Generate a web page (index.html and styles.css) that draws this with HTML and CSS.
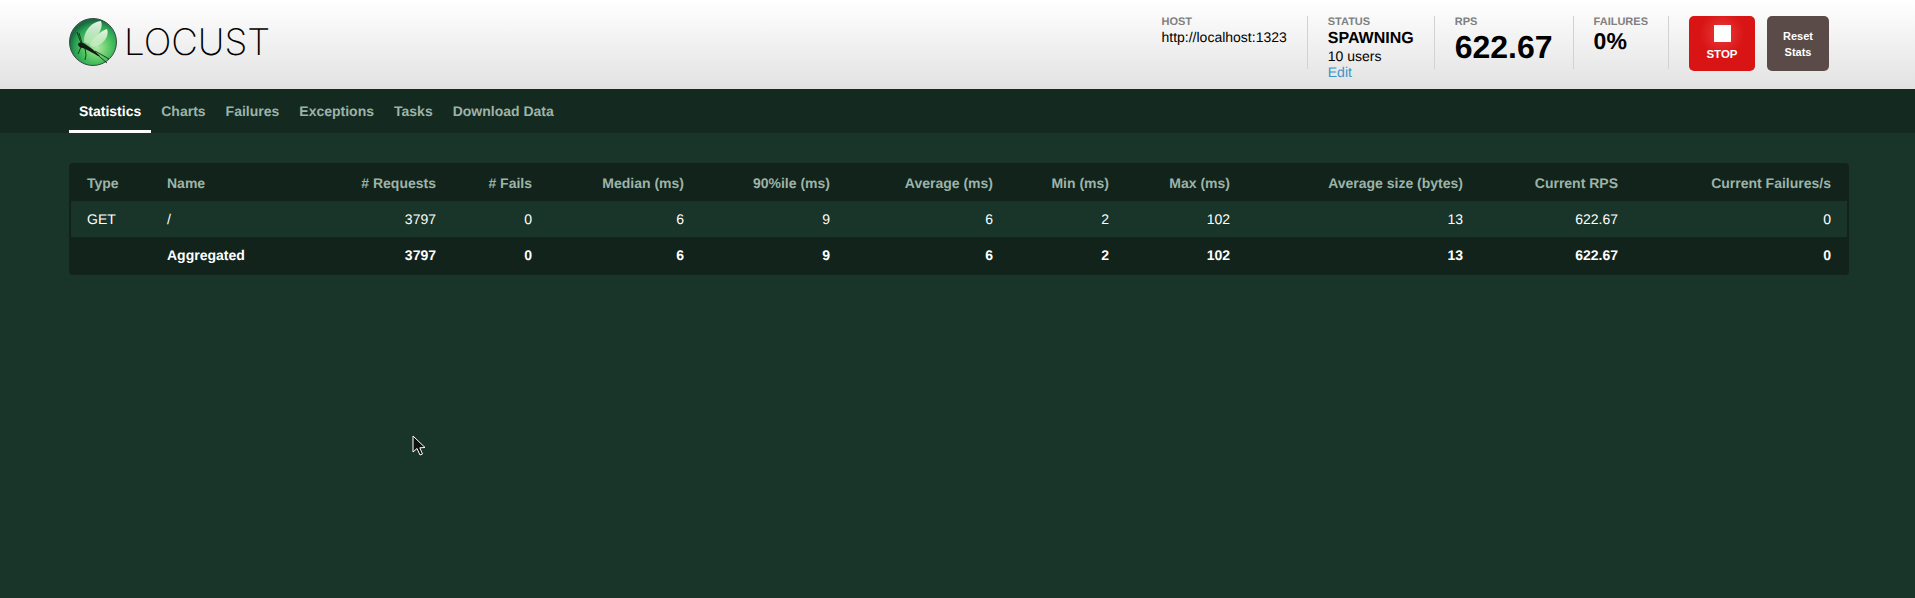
FILE: index.html
```html
<!DOCTYPE html>
<html>
<head>
    <title>Locust</title>
    <link rel="stylesheet" href="styles.css">
</head>
<body>
    <div class="header">
        <div class="logo">
            <svg class="logo-mark" width="48" height="48" viewBox="0 0 48 48">
                <defs>
                    <radialGradient id="ball" cx="58%" cy="62%" r="58%">
                        <stop offset="0" stop-color="#b4e8a6"/>
                        <stop offset="0.5" stop-color="#52c661"/>
                        <stop offset="0.82" stop-color="#28a052"/>
                        <stop offset="1" stop-color="#1a6b42"/>
                    </radialGradient>
                    <linearGradient id="wing" x1="0" y1="0" x2="0" y2="1">
                        <stop offset="0" stop-color="#f2faee" stop-opacity="0.95"/>
                        <stop offset="1" stop-color="#d8f1d3" stop-opacity="0.55"/>
                    </linearGradient>
                </defs>
                <circle cx="24" cy="24" r="23.5" fill="url(#ball)" stroke="#3a4c45" stroke-width="1"/>
                <path d="M15 24 C14 14 22 4 32 3 C35 10 28 21 19 26 Z" fill="url(#wing)"/>
                <path d="M20 26 C26 20 31 13 38 11 C41 19 33 28 23 29 Z" fill="url(#wing)"/>
                <path d="M9 26 C10 24 13 24 16 26 C21 29 26 33 31 38 L29 38 C24 35 19 32 14 30 C11 30 9 28 9 26 Z" fill="#101a14"/>
                <g fill="none" stroke="#101a14" stroke-width="0.8">
                    <path d="M12 25 L8 14"/>
                    <path d="M13 25 L10 15"/>
                    <path d="M12 29 L9 36"/>
                    <path d="M16 30 L17 37 L16 42"/>
                    <path d="M24 33 L38 45"/>
                    <path d="M26 33 L40 41"/>
                </g>
            </svg>
            <span class="logo-text">LOCUST</span>
        </div>
        <div class="stats">
            <div class="stat">
                <div class="stat-label">HOST</div>
                <div class="stat-text host-text">http://localhost:1323</div>
            </div>
            <div class="stat">
                <div class="stat-label">STATUS</div>
                <div class="stat-status">SPAWNING</div>
                <div class="stat-text">10 users</div>
                <a class="edit" href="#">Edit</a>
            </div>
            <div class="stat">
                <div class="stat-label">RPS</div>
                <div class="stat-big">622.67</div>
            </div>
            <div class="stat">
                <div class="stat-label">FAILURES</div>
                <div class="stat-medium">0%</div>
            </div>
        </div>
        <div class="buttons">
            <button class="stop-button"><span class="stop-icon"></span>STOP</button>
            <button class="reset-button">Reset<br>Stats</button>
        </div>
    </div>

    <div class="nav">
        <a class="tab active" href="#">Statistics</a>
        <a class="tab" href="#">Charts</a>
        <a class="tab" href="#">Failures</a>
        <a class="tab" href="#">Exceptions</a>
        <a class="tab" href="#">Tasks</a>
        <a class="tab" href="#">Download Data</a>
    </div>

    <div class="content">
        <div class="table-box">
            <table class="stats-table">
                <colgroup>
                    <col class="c-type"><col class="c-name"><col class="c-req"><col class="c-fails">
                    <col class="c-median"><col class="c-pct"><col class="c-avg"><col class="c-min">
                    <col class="c-max"><col class="c-size"><col class="c-rps"><col class="c-fps">
                </colgroup>
                <thead>
                    <tr>
                        <th class="left">Type</th>
                        <th class="left">Name</th>
                        <th># Requests</th>
                        <th># Fails</th>
                        <th>Median (ms)</th>
                        <th>90%ile (ms)</th>
                        <th>Average (ms)</th>
                        <th>Min (ms)</th>
                        <th>Max (ms)</th>
                        <th>Average size (bytes)</th>
                        <th>Current RPS</th>
                        <th>Current Failures/s</th>
                    </tr>
                </thead>
                <tbody>
                    <tr class="row">
                        <td class="left">GET</td>
                        <td class="left">/</td>
                        <td>3797</td>
                        <td>0</td>
                        <td>6</td>
                        <td>9</td>
                        <td>6</td>
                        <td>2</td>
                        <td>102</td>
                        <td>13</td>
                        <td>622.67</td>
                        <td>0</td>
                    </tr>
                    <tr class="total">
                        <td class="left"></td>
                        <td class="left">Aggregated</td>
                        <td>3797</td>
                        <td>0</td>
                        <td>6</td>
                        <td>9</td>
                        <td>6</td>
                        <td>2</td>
                        <td>102</td>
                        <td>13</td>
                        <td>622.67</td>
                        <td>0</td>
                    </tr>
                </tbody>
            </table>
        </div>
    </div>

    <!-- mouse pointer caught in the screenshot -->
    <svg class="pointer" width="14" height="22" viewBox="0 0 14 22">
        <path d="M1 1 L1 17 L5 13.5 L8 20 L10.5 19 L7.8 12.8 L13 12.5 Z" fill="#0c0f0e" stroke="#fff" stroke-width="1"/>
    </svg>
</body>
</html>
```

FILE: styles.css
```css
* {
    box-sizing: border-box;
}

html, body {
    height: 100%;
}

body {
    margin: 0;
    background-color: #19352a;
    font-family: "Liberation Sans", Arial, sans-serif;
    font-size: 14px;
    color: #fff;
    text-rendering: geometricPrecision;
    overflow: hidden;
}

.header {
    height: 89px;
    padding: 16px 86px 0 69px;
    display: flex;
    background: linear-gradient(#fff, #e2e2e2);
    color: #000;
}

.logo {
    display: flex;
    align-items: center;
    height: 51px;
}

.logo-mark {
    margin-right: 7px;
}

.logo-text {
    font-family: "Inter", sans-serif;
    font-weight: 200;
    font-size: 36.7px;
    color: #000;
}

.stats {
    margin-left: auto;
    display: flex;
}

.stat {
    height: 53px;
    padding: 0 20px;
    border-right: 1px solid #d2d2d2;
}

.stat-label {
    font-size: 11px;
    font-weight: bold;
    line-height: 12px;
    color: #808080;
}

.stat-text {
    font-size: 14px;
    line-height: 16px;
}

.host-text {
    margin-top: 1px;
}

.stat-status {
    font-size: 16px;
    font-weight: bold;
    line-height: 18px;
    margin-top: 2px;
}

.stat-big {
    font-size: 32px;
    font-weight: bold;
    line-height: 38px;
}

.stat-medium {
    font-size: 23px;
    font-weight: bold;
    line-height: 26px;
}

.edit {
    display: block;
    font-size: 14px;
    line-height: 16px;
    color: #3b93c9;
    text-decoration: none;
}

.buttons {
    display: flex;
    gap: 12px;
    margin-left: 20px;
    align-items: flex-start;
}

.stop-button, .reset-button {
    height: 55px;
    border: 0;
    border-radius: 5px;
    padding: 0;
    color: #fff;
    font-family: inherit;
    font-size: 11px;
    font-weight: bold;
}

.stop-button {
    width: 66px;
    background: radial-gradient(circle at 50% 32%, #ea3c3c 0, #d91414 45%);
    font-size: 11.5px;
    display: flex;
    flex-direction: column;
    align-items: center;
    padding-top: 9px;
}

.stop-icon {
    width: 17px;
    height: 17px;
    background-color: #fff;
    margin-bottom: 6px;
}

.reset-button {
    width: 62px;
    background-color: #5a4b49;
    line-height: 16px;
}

.nav {
    height: 44px;
    padding-left: 69px;
    display: flex;
    background-color: #14291f;
}

.tab {
    height: 44px;
    padding: 14px 10px 0;
    font-weight: bold;
    color: #9db3a9;
    text-decoration: none;
    line-height: 16px;
}

.tab.active {
    color: #fff;
    border-bottom: 3px solid #fff;
}

.content {
    padding: 30px 66px 0 69px;
}

.table-box {
    width: 1780px;
    padding: 0 2px;
    border-radius: 4px;
    background-color: #11231a;
}

.stats-table {
    width: 100%;
    table-layout: fixed;
    border-collapse: collapse;
}

.c-type { width: 80px; }
.c-name { width: 157px; }
.c-req { width: 144px; }
.c-fails { width: 96px; }
.c-median { width: 152px; }
.c-pct { width: 146px; }
.c-avg { width: 163px; }
.c-min { width: 116px; }
.c-max { width: 121px; }
.c-size { width: 233px; }
.c-rps { width: 155px; }
.c-fps { width: 213px; }

.stats-table th, .stats-table td {
    padding: 0 16px;
    text-align: right;
    white-space: nowrap;
}

.stats-table th {
    height: 38px;
    padding-top: 2px;
    color: #9db3a9;
}

.stats-table td {
    height: 36px;
}

.stats-table .left {
    text-align: left;
}

.row {
    background-color: #19352a;
}

.stats-table .total td {
    height: 38px;
    padding-bottom: 2px;
    font-weight: bold;
}

.pointer {
    position: absolute;
    left: 412px;
    top: 435px;
}
```
